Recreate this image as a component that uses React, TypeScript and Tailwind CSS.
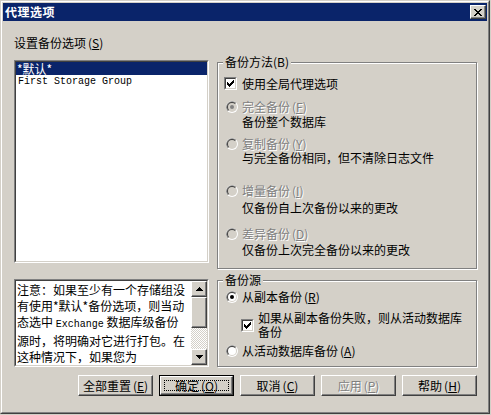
import type { ReactNode } from "react";

const Mn = ({ k }: { k: string }) => (
  <span className="ml-[2px]">
    (<u className="underline-offset-[1px]">{k}</u>)
  </span>
);

const Mono = ({ children }: { children: ReactNode }) => (
  <span className="font-['Liberation_Mono',monospace] text-[10px]">{children}</span>
);

const Radio = ({ checked, disabled }: { checked?: boolean; disabled?: boolean }) => (
  <svg width="12" height="12" viewBox="0 0 12 12" className="shrink-0">
    <circle cx="6" cy="6" r="6" fill="#ffffff" />
    <path d="M1.76 10.24A6 6 0 0 1 10.24 1.76Z" fill="#808080" />
    <circle cx="6" cy="6" r="5" fill="#d4d0c8" />
    <path d="M2.46 9.54A5 5 0 0 1 9.54 2.46Z" fill="#404040" />
    <circle cx="6" cy="6" r="4" fill={disabled ? "#d4d0c8" : "#ffffff"} />
    {checked && <circle cx="6" cy="6" r="2" fill={disabled ? "#808080" : "#000000"} />}
  </svg>
);

const CheckBox = () => (
  <div className="w-[13px] h-[13px] shrink-0 border border-t-[#808080] border-l-[#808080] border-r-white border-b-white">
    <div className="w-full h-full border border-t-[#404040] border-l-[#404040] border-r-[#d4d0c8] border-b-[#d4d0c8] bg-white flex items-center justify-center">
      <svg width="7" height="7" viewBox="0 0 7 7" shapeRendering="crispEdges">
        <rect x="0" y="2" width="1" height="3" fill="#000" />
        <rect x="1" y="3" width="1" height="3" fill="#000" />
        <rect x="2" y="4" width="1" height="3" fill="#000" />
        <rect x="3" y="3" width="1" height="3" fill="#000" />
        <rect x="4" y="2" width="1" height="3" fill="#000" />
        <rect x="5" y="1" width="1" height="3" fill="#000" />
        <rect x="6" y="0" width="1" height="3" fill="#000" />
      </svg>
    </div>
  </div>
);

const Raised = ({ className = "", children }: { className?: string; children?: ReactNode }) => (
  <div
    className={`border border-t-white border-l-white border-r-[#404040] border-b-[#404040] shadow-[inset_-1px_-1px_0_#808080] bg-[#d4d0c8] flex items-center justify-center ${className}`}
  >
    {children}
  </div>
);

const Group = ({ title, className = "", children }: { title: string; className?: string; children: ReactNode }) => (
  <div className={`relative border border-[#808080] shadow-[inset_1px_1px_0_#fff,1px_1px_0_#fff] ${className}`}>
    <span className="absolute left-[5px] -top-[7px] bg-[#d4d0c8] px-[2px] leading-[12px] whitespace-nowrap">
      {title}
    </span>
    {children}
  </div>
);

const Btn = ({ children, def, disabled }: { children: ReactNode; def?: boolean; disabled?: boolean }) => {
  const label = (
    <span className={disabled ? "text-[#808080] [text-shadow:1px_1px_0_#fff]" : ""}>{children}</span>
  );
  if (def)
    return (
      <div className="w-[75px] h-[21px] border border-black">
        <Raised className="relative w-full h-full">
          <div className="absolute inset-[3px] border border-dotted border-black" />
          {label}
        </Raised>
      </div>
    );
  return <Raised className="w-[75px] h-[21px]">{label}</Raised>;
};

const Arrow = ({ up }: { up?: boolean }) => (
  <svg width="7" height="4" viewBox="0 0 7 4" shapeRendering="crispEdges">
    {up ? <path d="M3 0h1v1h1v1h1v1h1v1H0V3h1V2h1V1h1Z" fill="#000" /> : <path d="M0 0h7v1H6v1H5v1H4v1H3V3H2V2H1V1H0Z" fill="#000" />}
  </svg>
);

const Disabled = ({ children }: { children: ReactNode }) => (
  <span className="text-[#808080] [text-shadow:1px_1px_0_#fff]">{children}</span>
);

export default function App() {
  return (
    <div className="w-[491px] h-[415px] bg-[#d4d0c8] font-['Noto_Sans_CJK_SC','Noto_Sans',sans-serif] text-[12px] leading-[12px] text-black">
      <div className="w-[490px] h-[414px] border border-t-[#d4d0c8] border-l-[#d4d0c8] border-r-[#404040] border-b-[#404040]">
        <div className="h-full border border-t-white border-l-white border-r-[#808080] border-b-[#808080] p-[1px] flex flex-col">
          {/* Title bar */}
          <div className="h-[18px] bg-[#0a246a] flex items-center justify-between pl-[2px] pr-[1px]">
            <span className="text-white font-bold tracking-[0.5px]">代理选项</span>
            <Raised className="w-[16px] h-[14px]">
              <svg width="8" height="7" viewBox="0 0 8 7" shapeRendering="crispEdges">
                <path d="M0 0h2v1h1v1h2V1h1V0h2v1H7v1H6v1H5v1h1v1h1v1h1v1H6V6H5V5H3v1H2v1H0V6h1V5h1V4h1V3H2V2H1V1H0Z" fill="#000" />
              </svg>
            </Raised>
          </div>

          {/* Client area */}
          <div className="flex-1 flex flex-col pl-[11px] pr-[10px] pt-[16px]">
            <div className="flex gap-[8px]">
              <div className="w-[195px] flex flex-col">
                <div className="h-[12px] whitespace-nowrap">
                  设置备份选项<Mn k="S" />
                </div>
                <div className="mt-[11px] h-[203px] border border-t-[#808080] border-l-[#808080] border-r-white border-b-white">
                  <div className="h-full border border-t-[#404040] border-l-[#404040] border-r-[#d4d0c8] border-b-[#d4d0c8] bg-white">
                    <div className="h-[13px] bg-[#0a246a] text-white pl-[1px] flex items-center">*默认*</div>
                    <div className="h-[13px] pl-[2px] flex items-center">
                      <Mono>First Storage Group</Mono>
                    </div>
                  </div>
                </div>
                <div className="mt-[16px] h-[88px] border border-t-[#808080] border-l-[#808080] border-r-white border-b-white">
                  <div className="h-full border border-t-[#404040] border-l-[#404040] border-r-[#d4d0c8] border-b-[#d4d0c8] bg-white flex">
                    <div className="flex-1 overflow-hidden pl-[1px] leading-[16px] pt-[1px] whitespace-nowrap">
                      <div>注意：如果至少有一个存储组没</div>
                      <div>有使用*默认*备份选项，则当动</div>
                      <div>
                        态选中 <Mono>Exchange</Mono> 数据库级备份
                      </div>
                      <div>源时，将明确对它进行打包。在</div>
                      <div>这种情况下，如果您为</div>
                      <div>
                        <Mono>Exchange</Mono> 服务器添加存储组或
                      </div>
                    </div>
                    <div className="w-[16px] flex flex-col">
                      <Raised className="h-[16px]">
                        <Arrow up />
                      </Raised>
                      <Raised className="h-[31px]" />
                      <div className="flex-1 bg-[repeating-conic-gradient(#d4d0c8_0_25%,#ffffff_0_50%)] bg-[length:2px_2px]" />
                      <Raised className="h-[16px]">
                        <Arrow />
                      </Raised>
                    </div>
                  </div>
                </div>
              </div>

              <div className="w-[260px] flex flex-col pt-[25px]">
                <Group title="备份方法(B)" className="h-[207px]">
                  <div className="flex flex-col pl-[6px]">
                    <div className="mt-[14px] h-[13px] flex items-center gap-[5px]">
                      <CheckBox />
                      <span>使用全局代理选项</span>
                    </div>
                    <div className="mt-[11px] h-[12px] flex items-center gap-[4px] pl-[2px]">
                      <Radio checked disabled />
                      <Disabled>
                        完全备份<Mn k="F" />
                      </Disabled>
                    </div>
                    <div className="mt-[3px] h-[12px] pl-[18px]">备份整个数据库</div>
                    <div className="mt-[10px] h-[12px] flex items-center gap-[4px] pl-[2px]">
                      <Radio disabled />
                      <Disabled>
                        复制备份<Mn k="Y" />
                      </Disabled>
                    </div>
                    <div className="mt-[2px] h-[12px] pl-[18px]">与完全备份相同，但不清除日志文件</div>
                    <div className="mt-[21px] h-[12px] flex items-center gap-[4px] pl-[2px]">
                      <Radio disabled />
                      <Disabled>
                        增量备份<Mn k="I" />
                      </Disabled>
                    </div>
                    <div className="mt-[5px] h-[12px] pl-[18px]">仅备份自上次备份以来的更改</div>
                    <div className="mt-[14px] h-[12px] flex items-center gap-[4px] pl-[2px]">
                      <Radio disabled />
                      <Disabled>
                        差异备份<Mn k="D" />
                      </Disabled>
                    </div>
                    <div className="mt-[4px] h-[12px] pl-[18px]">仅备份上次完全备份以来的更改</div>
                  </div>
                </Group>

                <Group title="备份源" className="mt-[11px] h-[87px]">
                  <div className="flex flex-col pl-[6px]">
                    <div className="mt-[10px] h-[12px] flex items-center gap-[4px] pl-[2px]">
                      <Radio checked />
                      <span>
                        从副本备份<Mn k="R" />
                      </span>
                    </div>
                    <div className="mt-[8px] flex items-center gap-[4px] pl-[17px]">
                      <CheckBox />
                      <span className="leading-[14px] whitespace-nowrap">
                        如果从副本备份失败，则从活动数据库
                        <br />
                        备份
                      </span>
                    </div>
                    <div className="mt-[6px] h-[12px] flex items-center gap-[4px] pl-[2px]">
                      <Radio />
                      <span>
                        从活动数据库备份<Mn k="A" />
                      </span>
                    </div>
                  </div>
                </Group>
              </div>
            </div>

            {/* Buttons */}
            <div className="mt-[8px] flex justify-end gap-[6px]">
              <Btn>
                全部重置<Mn k="E" />
              </Btn>
              <Btn def>
                确定<Mn k="O" />
              </Btn>
              <Btn>
                取消<Mn k="C" />
              </Btn>
              <Btn disabled>
                应用<Mn k="P" />
              </Btn>
              <Btn>
                帮助<Mn k="H" />
              </Btn>
            </div>
          </div>
        </div>
      </div>
    </div>
  );
}
